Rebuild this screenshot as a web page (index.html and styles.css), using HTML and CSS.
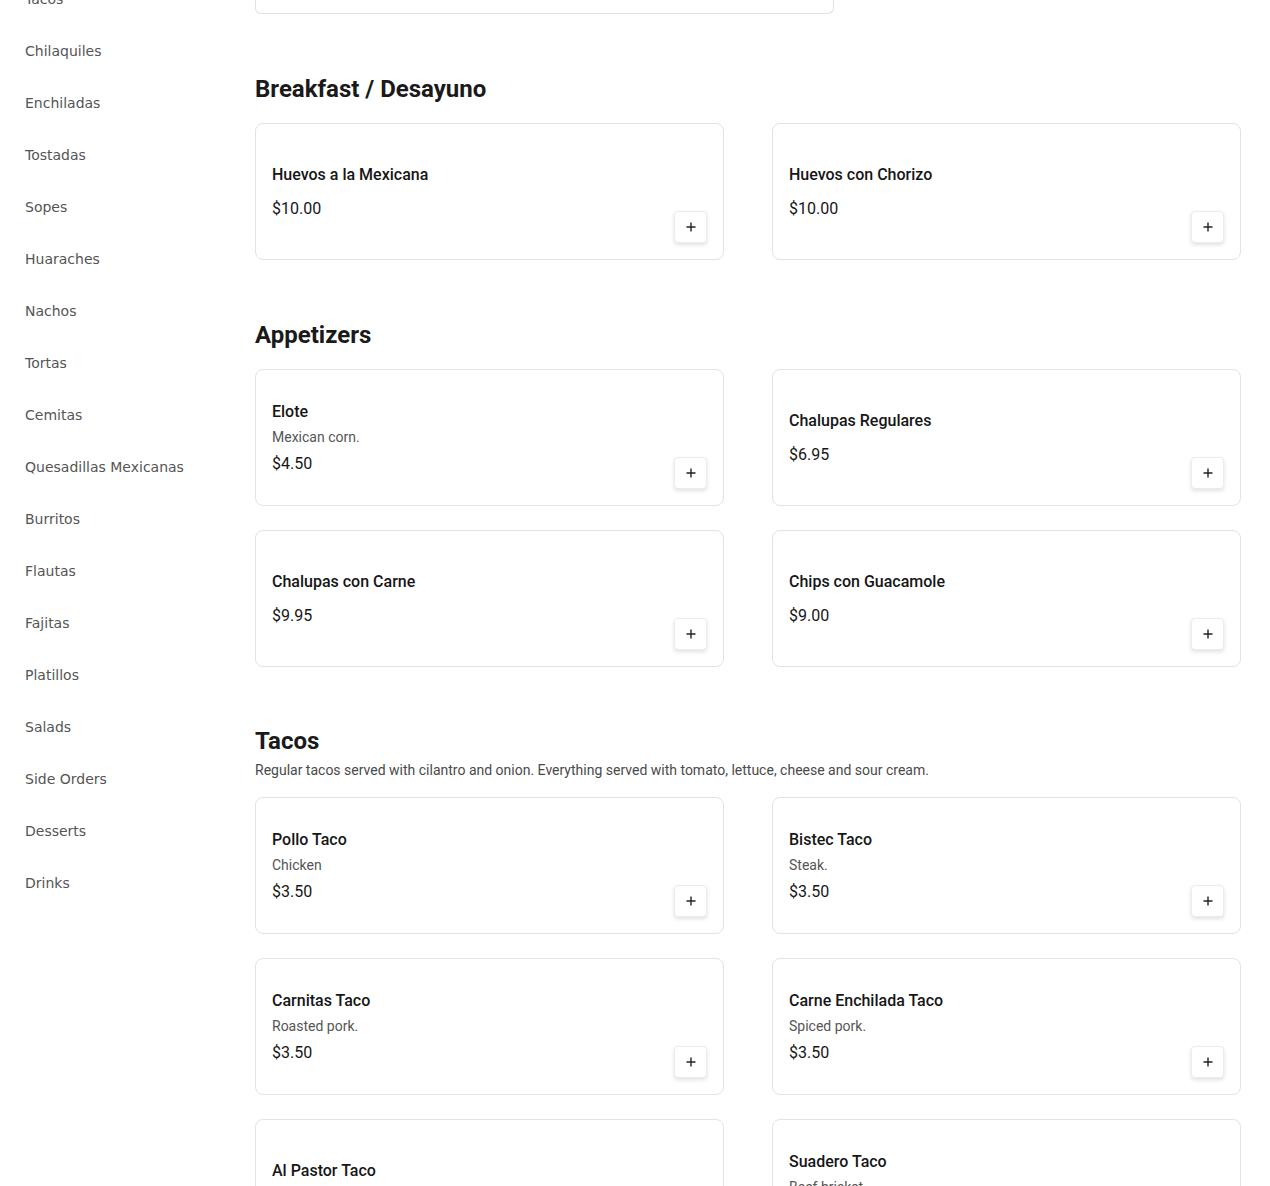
FILE: index.html
```html
<!DOCTYPE html>
<html lang="en">
<head>
<meta charset="utf-8">
<title>Menu</title>
<link rel="stylesheet" href="styles.css">
</head>
<body>
<div class="page">
  <nav class="sidebar">
    <a class="cat">Tacos</a>
    <a class="cat">Chilaquiles</a>
    <a class="cat">Enchiladas</a>
    <a class="cat">Tostadas</a>
    <a class="cat">Sopes</a>
    <a class="cat">Huaraches</a>
    <a class="cat">Nachos</a>
    <a class="cat">Tortas</a>
    <a class="cat">Cemitas</a>
    <a class="cat">Quesadillas Mexicanas</a>
    <a class="cat">Burritos</a>
    <a class="cat">Flautas</a>
    <a class="cat">Fajitas</a>
    <a class="cat">Platillos</a>
    <a class="cat">Salads</a>
    <a class="cat">Side Orders</a>
    <a class="cat">Desserts</a>
    <a class="cat">Drinks</a>
  </nav>
  <main class="main">
    <div class="top-box"></div>

    <section class="section">
      <div class="section-head"><h2>Breakfast / Desayuno</h2></div>
      <div class="grid">
        <div class="card"><div class="info"><div class="title">Huevos a la Mexicana</div><div class="price">$10.00</div></div><button class="add"><svg viewBox="0 0 12 12" width="12" height="12"><path d="M6 1.5v9M1.5 6h9" stroke="#222" stroke-width="1.4" fill="none"/></svg></button></div>
        <div class="card"><div class="info"><div class="title">Huevos con Chorizo</div><div class="price">$10.00</div></div><button class="add"><svg viewBox="0 0 12 12" width="12" height="12"><path d="M6 1.5v9M1.5 6h9" stroke="#222" stroke-width="1.4" fill="none"/></svg></button></div>
      </div>
    </section>

    <section class="section">
      <div class="section-head"><h2>Appetizers</h2></div>
      <div class="grid">
        <div class="card"><div class="info"><div class="title">Elote</div><div class="desc">Mexican corn.</div><div class="price">$4.50</div></div><button class="add"><svg viewBox="0 0 12 12" width="12" height="12"><path d="M6 1.5v9M1.5 6h9" stroke="#222" stroke-width="1.4" fill="none"/></svg></button></div>
        <div class="card"><div class="info"><div class="title">Chalupas Regulares</div><div class="price">$6.95</div></div><button class="add"><svg viewBox="0 0 12 12" width="12" height="12"><path d="M6 1.5v9M1.5 6h9" stroke="#222" stroke-width="1.4" fill="none"/></svg></button></div>
        <div class="card"><div class="info"><div class="title">Chalupas con Carne</div><div class="price">$9.95</div></div><button class="add"><svg viewBox="0 0 12 12" width="12" height="12"><path d="M6 1.5v9M1.5 6h9" stroke="#222" stroke-width="1.4" fill="none"/></svg></button></div>
        <div class="card"><div class="info"><div class="title">Chips con Guacamole</div><div class="price">$9.00</div></div><button class="add"><svg viewBox="0 0 12 12" width="12" height="12"><path d="M6 1.5v9M1.5 6h9" stroke="#222" stroke-width="1.4" fill="none"/></svg></button></div>
      </div>
    </section>

    <section class="section section-last">
      <div class="section-head"><h2>Tacos</h2><p class="section-desc">Regular tacos served with cilantro and onion. Everything served with tomato, lettuce, cheese and sour cream.</p></div>
      <div class="grid">
        <div class="card"><div class="info"><div class="title">Pollo Taco</div><div class="desc">Chicken</div><div class="price">$3.50</div></div><button class="add"><svg viewBox="0 0 12 12" width="12" height="12"><path d="M6 1.5v9M1.5 6h9" stroke="#222" stroke-width="1.4" fill="none"/></svg></button></div>
        <div class="card"><div class="info"><div class="title">Bistec Taco</div><div class="desc">Steak.</div><div class="price">$3.50</div></div><button class="add"><svg viewBox="0 0 12 12" width="12" height="12"><path d="M6 1.5v9M1.5 6h9" stroke="#222" stroke-width="1.4" fill="none"/></svg></button></div>
        <div class="card"><div class="info"><div class="title">Carnitas Taco</div><div class="desc">Roasted pork.</div><div class="price">$3.50</div></div><button class="add"><svg viewBox="0 0 12 12" width="12" height="12"><path d="M6 1.5v9M1.5 6h9" stroke="#222" stroke-width="1.4" fill="none"/></svg></button></div>
        <div class="card"><div class="info"><div class="title">Carne Enchilada Taco</div><div class="desc">Spiced pork.</div><div class="price">$3.50</div></div><button class="add"><svg viewBox="0 0 12 12" width="12" height="12"><path d="M6 1.5v9M1.5 6h9" stroke="#222" stroke-width="1.4" fill="none"/></svg></button></div>
        <div class="card"><div class="info"><div class="title">Al Pastor Taco</div><div class="price">$3.50</div></div><button class="add"><svg viewBox="0 0 12 12" width="12" height="12"><path d="M6 1.5v9M1.5 6h9" stroke="#222" stroke-width="1.4" fill="none"/></svg></button></div>
        <div class="card"><div class="info"><div class="title">Suadero Taco</div><div class="desc">Beef brisket.</div><div class="price">$3.50</div></div><button class="add"><svg viewBox="0 0 12 12" width="12" height="12"><path d="M6 1.5v9M1.5 6h9" stroke="#222" stroke-width="1.4" fill="none"/></svg></button></div>
      </div>
    </section>
  </main>
</div>
</body>
</html>
```
FILE: styles.css
```css
* { box-sizing: border-box; }
html, body { margin: 0; padding: 0; background: #fff; }
body { font-family: Roboto, "Liberation Sans", sans-serif; color: #1a1a1a; }

.page {
  display: flex;
  align-items: flex-start;
  margin-top: -27px;
}

.sidebar {
  width: 255px;
  flex: none;
  padding-left: 25px;
  display: flex;
  flex-direction: column;
}
.cat {
  display: block;
  height: 52px;
  line-height: 52px;
  font-family: "DejaVu Sans", sans-serif;
  font-size: 14px;
  color: #555;
  text-decoration: none;
}

.main {
  width: 986px;
  flex: none;
}

.top-box {
  width: 579px;
  height: 41px;
  border: 1px solid #e2e2e2;
  border-top: none;
  border-radius: 0 0 6px 6px;
}

.section { margin-top: 59px; }
.section-last { margin-top: 58px; }
.section-head { margin-bottom: 17px; }
.section-head h2 {
  margin: 0;
  font-size: 24px;
  line-height: 33px;
  font-weight: 700;
  color: #1a1a1a;
}
.section-desc {
  margin: 2px 0 0;
  font-size: 14px;
  line-height: 20px;
  color: #4a4a4a;
}

.grid {
  display: grid;
  grid-template-columns: 469px 469px;
  column-gap: 48px;
  row-gap: 24px;
}

.card {
  min-height: 137px;
  border: 1px solid #e3e3e3;
  border-radius: 8px;
  padding: 16px;
  display: flex;
  align-items: center;
  background: #fff;
}
.info { flex: 1; margin-top: 1px; }
.title {
  font-size: 16px;
  line-height: 24px;
  font-weight: 500;
  color: #161616;
}
.desc {
  margin: 3px 0 -5px;
  font-size: 14px;
  line-height: 20px;
  color: #555;
}
.price {
  margin-top: 10px;
  font-size: 16px;
  line-height: 24px;
  color: #161616;
}
.add {
  align-self: flex-end;
  width: 33px;
  height: 32px;
  flex: none;
  padding: 0;
  border: 1px solid #ececec;
  border-radius: 4px;
  background: #fff;
  box-shadow: 0 2px 4px rgba(0,0,0,0.12);
  display: flex;
  align-items: center;
  justify-content: center;
}
.add svg { display: block; }
```
